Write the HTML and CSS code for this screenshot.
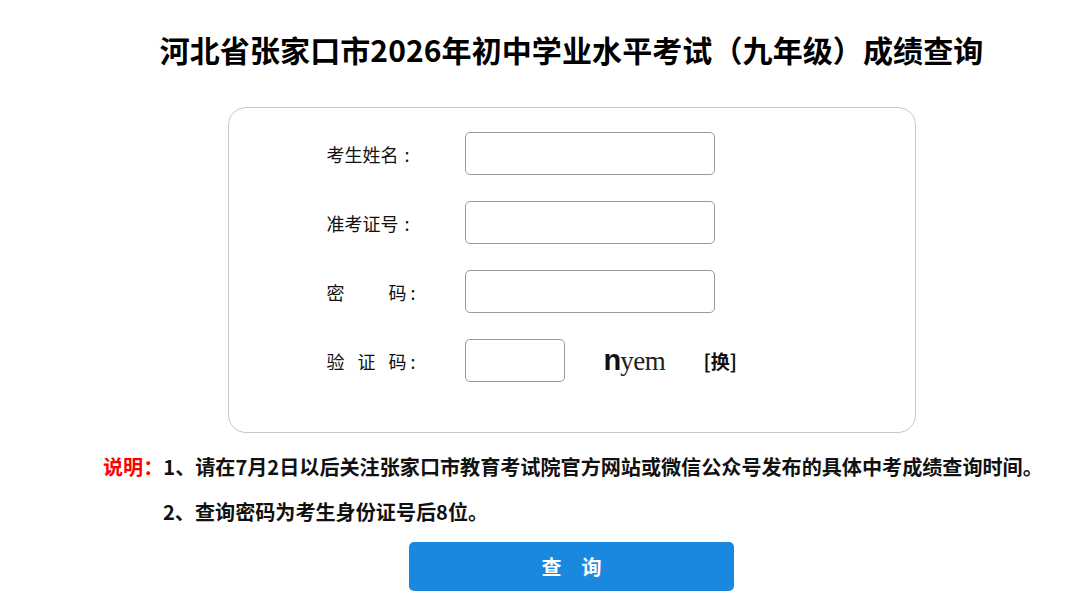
FILE: index.html
```html
<!DOCTYPE html>
<html lang="zh-CN">
<head>
<meta charset="utf-8">
<title>成绩查询</title>
<link rel="stylesheet" href="styles.css">
</head>
<body>
<div class="page">
  <h1 class="title">河北省张家口市2026年初中学业水平考试（九年级）成绩查询</h1>
  <form class="card">
    <div class="row">
      <label class="label"><span class="chars">考生姓名</span><span class="colon">:</span></label>
      <input class="field" type="text">
    </div>
    <div class="row">
      <label class="label"><span class="chars">准考证号</span><span class="colon">:</span></label>
      <input class="field" type="text">
    </div>
    <div class="row">
      <label class="label"><span class="chars spread">密 码</span><span class="colon">:</span></label>
      <input class="field" type="password">
    </div>
    <div class="row">
      <label class="label"><span class="chars spread">验 证 码</span><span class="colon">:</span></label>
      <input class="field small" type="text">
      <span class="captcha"><span class="c1">n</span><span class="c2">yem</span></span>
      <a class="swap">[换]</a>
    </div>
  </form>
  <div class="notes">
    <p class="note"><span class="tag">说明：</span>1、请在7月2日以后关注张家口市教育考试院官方网站或微信公众号发布的具体中考成绩查询时间。</p>
    <p class="note indent">2、查询密码为考生身份证号后8位。</p>
  </div>
  <button class="submit" type="button">查　询</button>
</div>
</body>
</html>
```

FILE: styles.css
```css
html, body {
  margin: 0;
  padding: 0;
  background: #fff;
}
body {
  font-family: "Noto Sans CJK SC", "Noto Sans", sans-serif;
  color: #111;
}
.page {
  padding-left: 52px;
  padding-top: 29px;
  display: flex;
  flex-direction: column;
  align-items: center;
}
.title {
  margin: 0;
  font-size: 30px;
  line-height: 40px;
  font-weight: 700;
  color: #000;
  letter-spacing: 0.1px;
  white-space: nowrap;
}
.card {
  margin-top: 38px;
  width: 688px;
  box-sizing: border-box;
  border: 1px solid #c8c8c8;
  border-radius: 18px;
  padding: 24px 0 50px 98px;
  display: flex;
  flex-direction: column;
  gap: 26px;
  height: 326px;
}
.row {
  display: flex;
  align-items: center;
  height: 43px;
}
.label {
  width: 138px;
  display: flex;
  align-items: center;
  font-size: 18px;
  color: #111;
}
.chars {
  display: inline-block;
}
.chars.spread {
  width: 80px;
  text-align: justify;
  text-align-last: justify;
}
.colon {
  margin-left: 6px;
}
.spread + .colon {
  margin-left: 4px;
}
.field {
  width: 250px;
  height: 43px;
  box-sizing: border-box;
  border: 1px solid #9a9a9a;
  border-radius: 5px;
  background: #fff;
  outline: none;
  padding: 0 8px;
  font-size: 16px;
}
.field.small {
  width: 100px;
}
.captcha {
  margin-left: 39px;
  width: 100px;
  display: flex;
  align-items: baseline;
}
.c1 {
  font-family: "Liberation Sans", Arial, sans-serif;
  font-weight: 700;
  font-size: 29px;
  color: #111;
  letter-spacing: -1px;
}
.c2 {
  font-family: "Liberation Serif", serif;
  font-size: 27px;
  color: #222;
  letter-spacing: -0.5px;
}
.swap {
  font-size: 19px;
  font-weight: 700;
  color: #111;
}
.notes {
  align-self: flex-start;
  margin-left: 51px;
  margin-top: 11px;
}
.note {
  margin: 0;
  font-size: 20.1px;
  line-height: 45px;
  font-weight: 700;
  color: #111;
  white-space: nowrap;
}
.tag {
  color: #f00;
}
.indent {
  padding-left: 60px;
}
.submit {
  margin-top: 8px;
  width: 325px;
  height: 49px;
  border: none;
  border-radius: 5px;
  background: #1b88e0;
  color: #fff;
  font-family: "Noto Sans CJK SC", sans-serif;
  font-size: 20px;
  font-weight: 700;
  cursor: pointer;
}
```
